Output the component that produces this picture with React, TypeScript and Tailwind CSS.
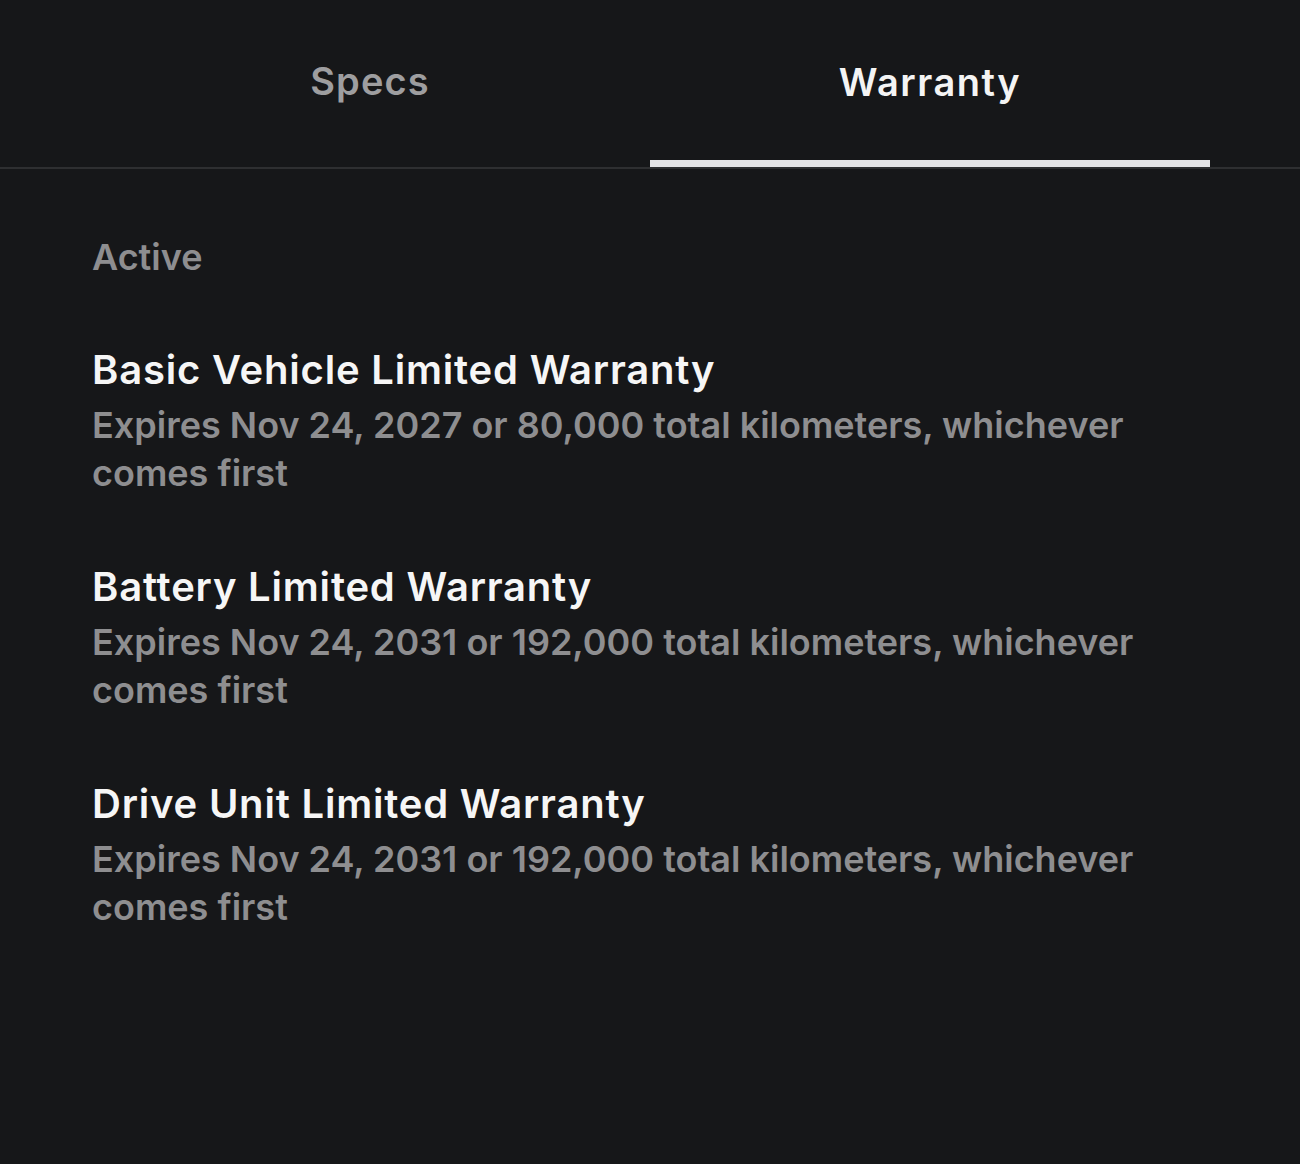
import React from "react";

const items = [
  {
    title: "Basic Vehicle Limited Warranty",
    desc: "Expires Nov 24, 2027 or 80,000 total kilometers, whichever comes first",
  },
  {
    title: "Battery Limited Warranty",
    desc: "Expires Nov 24, 2031 or 192,000 total kilometers, whichever comes first",
  },
  {
    title: "Drive Unit Limited Warranty",
    desc: "Expires Nov 24, 2031 or 192,000 total kilometers, whichever comes first",
  },
];

export default function App() {
  return (
    <div
      className="w-[1300px] h-[1164px] bg-[#161719] overflow-hidden"
      style={{ fontFamily: "Inter, 'Noto Sans', sans-serif" }}
    >
      <div className="border-b-2 border-[#2e2f31]">
        <div className="mx-[90px] flex">
          <div className="w-[560px] h-[167px] flex flex-col">
            <div className="flex-1 flex items-center justify-center pb-[4px] text-[38px] font-semibold tracking-[0.03em] text-[#9e9ea0]">
              Specs
            </div>
          </div>
          <div className="w-[560px] h-[167px] flex flex-col">
            <div className="flex-1 flex items-center justify-center pt-[4px] text-[38px] font-semibold tracking-[0.04em] text-[#f4f4f4]">
              Warranty
            </div>
            <div className="h-[7px] bg-[#e4e4e6]" />
          </div>
        </div>
      </div>
      <div className="pl-[92px] pr-[120px] pt-[64px]">
        <div className="text-[36px] leading-[48px] font-semibold tracking-normal text-[#8e8e90]">
          Active
        </div>
        <div className="mt-[63px] flex flex-col gap-[64px]">
          {items.map((it) => (
            <div key={it.title}>
              <div className="text-[40px] leading-[52px] font-semibold tracking-[0.02em] text-[#f6f6f6]">
                {it.title}
              </div>
              <div className="mt-[5px] text-[36px] leading-[48px] font-semibold tracking-normal text-[#8e8e90]">
                {it.desc}
              </div>
            </div>
          ))}
        </div>
      </div>
    </div>
  );
}
